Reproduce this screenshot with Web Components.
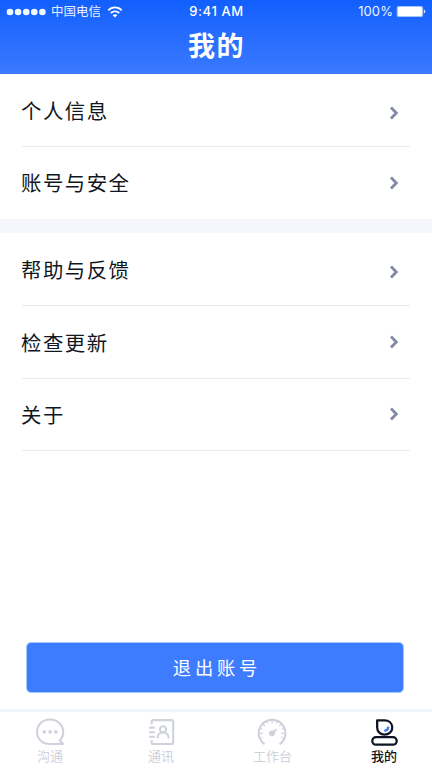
<!DOCTYPE html>
<html lang="zh-CN">
<head>
<meta charset="utf-8">
<title>我的</title>
<style>
html,body{margin:0;height:100%;overflow:hidden;background:#fff}
body{font-family:"Noto Sans CJK SC",sans-serif}
</style>
</head>
<body>
<my-app></my-app>
<script>
function define(name, html) {
  customElements.define(name, class extends HTMLElement {
    constructor() {
      super();
      const t = document.createElement('template');
      t.innerHTML = html;
      this.attachShadow({mode: 'open'}).append(t.content.cloneNode(true));
    }
  });
}

define('status-bar', `
<style>
:host{display:grid;grid-template-columns:1fr auto 1fr;height:23px;align-items:center;color:#fff;font:12.4px/23px Inter,"Noto Sans CJK SC",sans-serif}
div{display:flex;align-items:center}
.left{padding-left:6px;color:#e6f0ff}
.right{justify-content:flex-end;padding-right:6px;color:#edf4ff;gap:3px;font-size:13px;letter-spacing:.1px}
.time{font-weight:500;font-size:13px;letter-spacing:.6px;padding-left:1px}
.carrier{margin:0 6px 0 5px;font-size:12.5px}
svg{display:block}
</style>
<div class="left">
<svg width="40" height="8" viewBox="0 0 40 8" fill="#f2f8ff"><circle cx="4" cy="4" r="3.3"/><circle cx="12.1" cy="4" r="3.3"/><circle cx="20.2" cy="4" r="3.3"/><circle cx="28.3" cy="4" r="3.3"/><circle cx="36.4" cy="4" r="3.3"/></svg>
<span class="carrier">中国电信</span>
<svg width="16" height="12" viewBox="0 0 16 12" fill="none" stroke="#fff" stroke-width="1.8"><path d="M1.3 4.3C5 .5 11 .5 14.7 4.3M3.8 7c2.4-2.3 6-2.3 8.4 0"/><path d="M8 11.6 5.7 9.3q2.3-1.9 4.6 0z" fill="#fff" stroke="none"/></svg>
</div>
<div class="time">9:41 AM</div>
<div class="right"><span>100%</span>
<svg width="30" height="13" viewBox="0 0 30 13"><rect x=".7" y=".9" width="26.4" height="11.2" rx="2.2" fill="#a5c5ff"/><rect x="2" y="2.1" width="23.8" height="8.8" rx="1" fill="#fff"/><path d="M27.8 4.5q1.5.6 1.5 2t-1.5 2z" fill="#dceaff"/></svg>
</div>`);

define('page-header', `
<style>
:host{display:flex;flex-direction:column;height:73.5px;background:linear-gradient(#125fff,#3b79fe);color:#fff}
h1{margin:0;text-align:center;font-size:27px;font-weight:700;line-height:44px;letter-spacing:1.4px;padding-left:1px}
</style>
<status-bar></status-bar><h1><slot></slot></h1>`);

define('menu-row', `
<style>
:host{display:flex;box-sizing:border-box;height:72.5px;margin:0 22px;padding-right:10px;align-items:center;justify-content:space-between;border-bottom:1px solid #eaebed;color:#101722;font-size:20.4px;line-height:30px;letter-spacing:1.5px}
:host([last]){border-color:transparent;height:71.5px}
span{margin-left:-1px}
svg{display:block;margin-top:var(--arrow-shift,0px)}
</style>
<span><slot></slot></span>
<svg width="12" height="14" viewBox="0 0 12 14" fill="none" stroke="#8289a5" stroke-width="2.8"><path d="m3 1.6 5.3 5.4L3 12.4"/></svg>`);

define('menu-group', `
<style>:host{display:block;padding-top:1px}</style><slot></slot>`);

define('logout-button', `
<style>
:host{display:block;margin:0 28px 0 26px}
button{display:block;width:100%;height:51px;border:1px solid #a6c7ff;border-radius:5px;background:#3d7cff;color:#fff;font:400 18.3px/49px "Noto Sans CJK SC",sans-serif;letter-spacing:3.8px;padding:0 0 0 4px;box-sizing:border-box}
</style>
<button><slot></slot></button>`);

define('tab-item', `
<style>
:host{display:flex;flex-direction:column;align-items:center;color:#cfd2db;font-size:13px;line-height:18px}
:host([active]){color:#0d1422;font-weight:500}
::slotted(svg){display:block;width:31px;height:31px;margin-bottom:-1px}
</style>
<slot name="icon"></slot><span><slot></slot></span>`);

define('tab-bar', `
<style>
:host{display:grid;grid-template-columns:100px 122px 101px 122px;box-sizing:border-box;height:59px;padding-top:5px;border-top:3px solid #eff7fe;background:#fff}
</style>
<tab-item><svg slot="icon" viewBox="0 0 30 30" fill="none" stroke="#cfd2db" stroke-width="2"><path d="M27.2 26.2H14.5C7 26.2 2 21 2 14.2S7.4 2.5 14.6 2.5 27.3 7.7 27.3 14.4c0 3.2-1.2 6.2-3.4 8.3z" stroke-linejoin="round"/><g fill="#cfd2db" stroke="none"><circle cx="9" cy="14.4" r="1.7"/><circle cx="14.6" cy="14.4" r="1.7"/><circle cx="20.2" cy="14.4" r="1.7"/></g></svg>沟通</tab-item>
<tab-item><svg slot="icon" viewBox="0 0 30 30" fill="none" stroke="#cfd2db" stroke-width="2"><path d="M5.5 7V4.6q0-1.6 1.6-1.6h17.6q1.6 0 1.6 1.6v20q0 1.6-1.6 1.6H7.1q-1.6 0-1.6-1.6v-2.3M3 10.3h5.5M3 14.7h5.5M3 19.1h5.5"/><circle cx="16.5" cy="12" r="3"/><path d="M11 20.7c.3-3.7 2-5.7 5.5-5.7s5.2 2 5.5 5.7"/></svg>通讯</tab-item>
<tab-item><svg slot="icon" viewBox="0 0 30 30" fill="none" stroke="#cfd2db" stroke-width="2"><path d="M7.3 26.3C3.7 24 1.7 20.2 1.7 15.8 1.7 8.5 7.4 2.8 14.6 2.8s12.9 5.7 12.9 13c0 4.4-2.1 8.2-5.6 10.5"/><path d="M14.6 3v3.4M3 15.8h2.6M23.6 15.8h2.6M5.8 7l1.9 1.9M23.4 7l-1.9 1.9M9.7 4.2l.8 2M19.5 4.2l-.8 2M3 11l2 .8M26.2 11l-2 .8M3.6 20.6l2-.8M25.6 20.6l-2-.8" stroke-width="1.1"/><circle cx="14.4" cy="15.8" r="2.8" fill="#cfd2db" stroke="none"/><path d="m15.3 17.2 3.7-5.5-5.7 3.4z" fill="#cfd2db" stroke-width="1"/></svg>工作台</tab-item>
<tab-item active><svg slot="icon" viewBox="0 0 30 30" fill="none" stroke="#0e1422" stroke-width="2.2"><path d="M7.9 3.2h7c4.4 0 7.6 2.7 7.6 6.9s-3.3 7-7.4 7-7.2-2.9-7.2-7z" stroke-linejoin="round"/><path d="M18.7 9.3c-.1 2.4-1.5 3.9-3.9 4" stroke="#3d7cf4" stroke-width="2.3"/><rect x="3.2" y="19.5" width="23.6" height="7.3" rx="3.6"/></svg>我的</tab-item>`);

define('my-app', `
<style>
:host{display:flex;flex-direction:column;width:432px;height:768px;background:#fff}
.gap{height:14px;background:#f6f7fc;flex:none}
.first{--arrow-shift:5px}
.security{--arrow-shift:2px}
page-header,menu-group,tab-bar{flex:none}
logout-button{margin-top:auto;margin-bottom:16px}
</style>
<page-header>我的</page-header>
<menu-group><menu-row class="first">个人信息</menu-row><menu-row class="security" last>账号与安全</menu-row></menu-group>
<div class="gap"></div>
<menu-group><menu-row class="first">帮助与反馈</menu-row><menu-row>检查更新</menu-row><menu-row>关于</menu-row></menu-group>
<logout-button>退出账号</logout-button>
<tab-bar></tab-bar>`);
</script>
</body>
</html>
